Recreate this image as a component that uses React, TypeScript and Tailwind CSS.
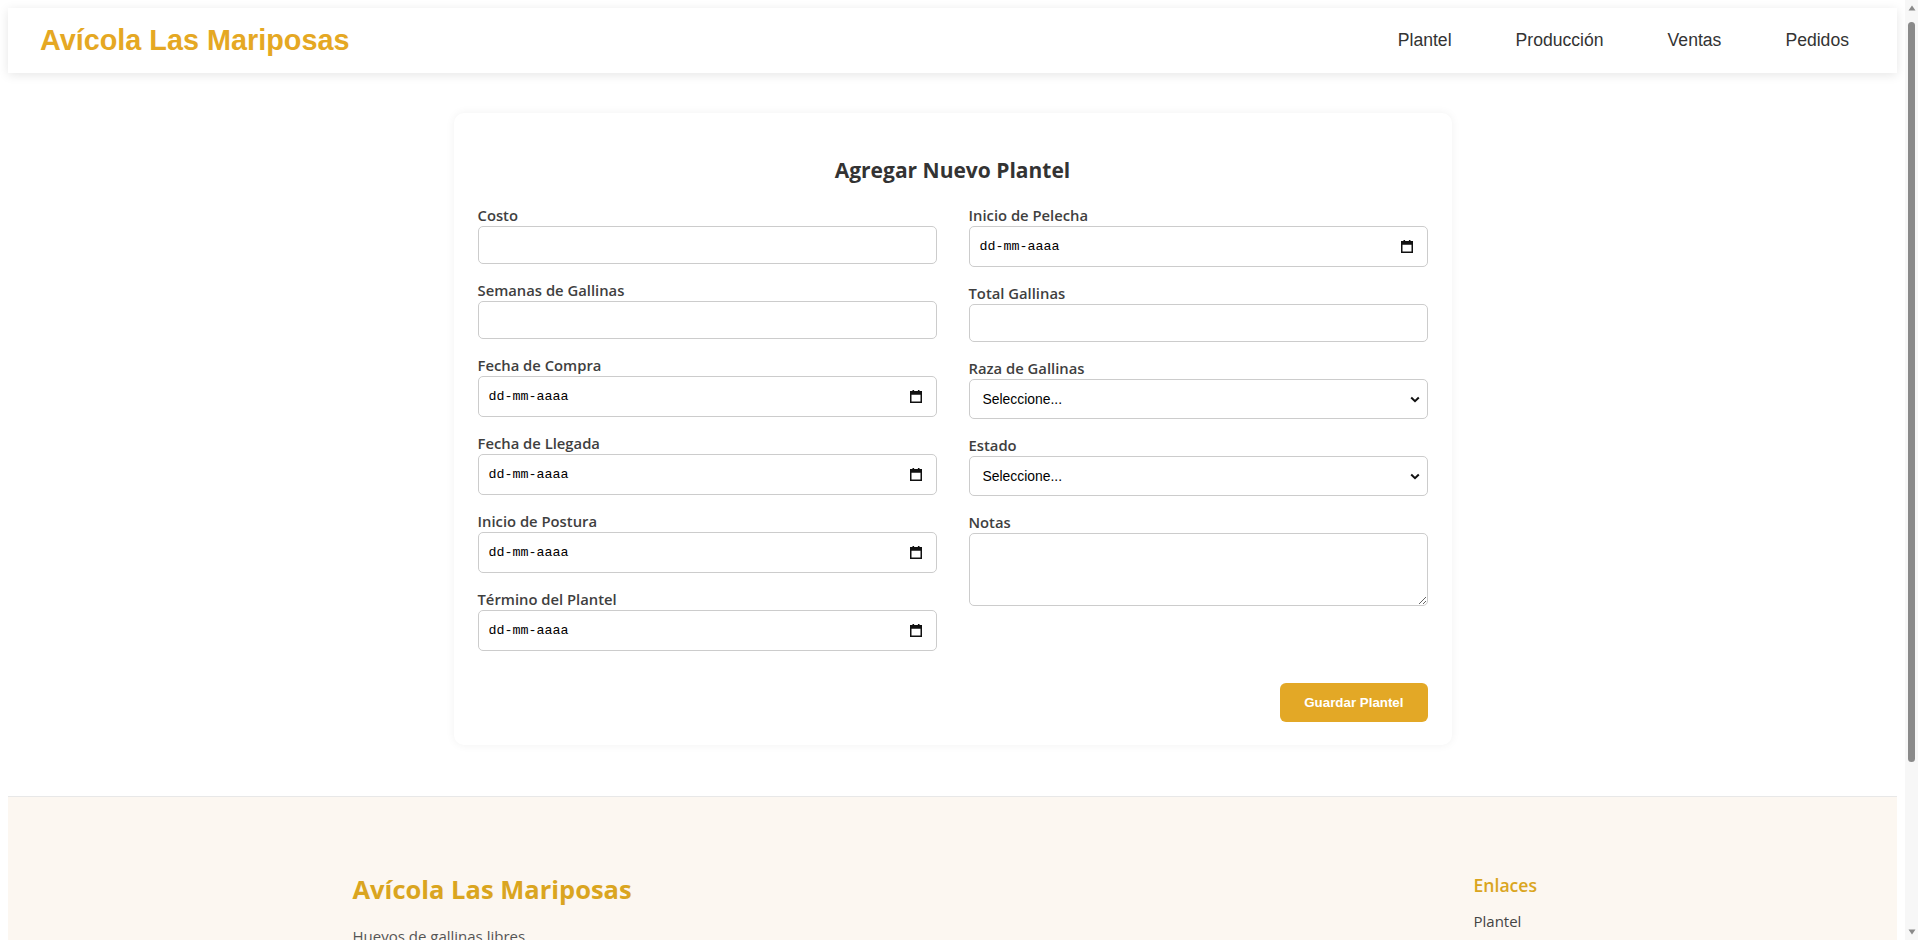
import React from "react";

const leftFields: { label: string; type: "text" | "date" }[] = [
  { label: "Costo", type: "text" },
  { label: "Semanas de Gallinas", type: "text" },
  { label: "Fecha de Compra", type: "date" },
  { label: "Fecha de Llegada", type: "date" },
  { label: "Inicio de Postura", type: "date" },
  { label: "Término del Plantel", type: "date" },
];

function CalendarIcon() {
  return (
    <svg width="12" height="13" viewBox="0 0 12 13" aria-hidden="true">
      <rect x="2.5" y="0" width="1.6" height="2.5" fill="#111" />
      <rect x="7.9" y="0" width="1.6" height="2.5" fill="#111" />
      <rect x="0.75" y="1.75" width="10.5" height="10.5" fill="none" stroke="#111" strokeWidth="1.5" />
      <rect x="0.75" y="1.75" width="10.5" height="3" fill="#111" />
    </svg>
  );
}

function Chevron() {
  return (
    <svg width="10" height="7" viewBox="0 0 10 7" aria-hidden="true">
      <path d="M1.2 1.5L5 5.2l3.8-3.7" fill="none" stroke="#111" strokeWidth="2" />
    </svg>
  );
}

function Label({ children }: { children: React.ReactNode }) {
  return (
    <label className="block text-[14.8px] font-semibold leading-[21px] text-[#3f3f3f]">{children}</label>
  );
}

function TextField({ label }: { label: string }) {
  return (
    <div className="mb-4">
      <Label>{label}</Label>
      <input
        type="text"
        className="block h-[38px] w-full rounded-[5px] border border-[#cccccc] bg-white px-[10px] text-[14px] outline-none"
      />
    </div>
  );
}

function DateField({ label }: { label: string }) {
  return (
    <div className="mb-4">
      <Label>{label}</Label>
      <div className="flex h-[41px] w-full items-center justify-between rounded-[5px] border border-[#cccccc] bg-white pl-[10px] pr-[14px]">
        <span className="font-['Liberation_Mono','DejaVu_Sans_Mono',monospace] text-[13.33px] text-black">dd-mm-aaaa</span>
        <CalendarIcon />
      </div>
    </div>
  );
}

function SelectField({ label }: { label: string }) {
  return (
    <div className="mb-4">
      <Label>{label}</Label>
      <div className="relative">
        <select className="block h-[40px] w-full appearance-none rounded-[5px] border border-[#cccccc] bg-white pl-[13px] font-['Liberation_Sans',Arial,sans-serif] text-[13.9px] text-black outline-none">
          <option>Seleccione...</option>
        </select>
        <span className="pointer-events-none absolute right-[8px] top-[17px] flex">
          <Chevron />
        </span>
      </div>
    </div>
  );
}

function FakeScrollbar() {
  return (
    <div className="fixed right-0 top-0 flex h-screen w-[13px] flex-col items-center bg-[#f7f7f7]">
      <svg width="8" height="6" viewBox="0 0 8 6" className="mt-[5px]" aria-hidden="true">
        <path d="M4 0.5L7.5 5.5H0.5z" fill="#8a8a8a" />
      </svg>
      <div className="mt-[11px] h-[740px] w-[7px] rounded-full bg-[#8a8a8a]" />
      <div className="flex-1" />
      <svg width="8" height="6" viewBox="0 0 8 6" className="mb-[5px]" aria-hidden="true">
        <path d="M4 5.5L7.5 0.5H0.5z" fill="#8a8a8a" />
      </svg>
    </div>
  );
}

export default function App() {
  return (
    <div className="pr-[13px]">
      <div className="bg-white p-2 font-['Open_Sans','Noto_Sans',sans-serif] text-[#333]">
        <header className="flex items-center justify-between bg-white px-8 py-4 font-['Liberation_Sans',Arial,sans-serif] shadow-[0_2px_10px_rgba(0,0,0,0.1)]">
          <h1 className="text-[28.8px] font-bold leading-[33px] text-[#e5a823]">Avícola Las Mariposas</h1>
          <nav className="flex gap-8 text-[17.6px] text-[#333]">
            {["Plantel", "Producción", "Ventas", "Pedidos"].map((l) => (
              <a key={l} href="#" className="px-4">
                {l}
              </a>
            ))}
          </nav>
        </header>

        <main className="pt-10 pb-[51px]">
          <div className="mx-auto w-full max-w-[998px] rounded-[10px] bg-white px-6 pt-[41px] pb-[23px] shadow-[0_0_10px_rgba(0,0,0,0.06)]">
            <h2 className="mb-[19px] text-center text-[21px] font-bold leading-[32px] text-[#333]">Agregar Nuevo Plantel</h2>
            <div className="grid grid-cols-2 gap-x-8">
              <div>
                {leftFields.map((f) =>
                  f.type === "text" ? <TextField key={f.label} label={f.label} /> : <DateField key={f.label} label={f.label} />
                )}
              </div>
              <div>
                <DateField label="Inicio de Pelecha" />
                <TextField label="Total Gallinas" />
                <SelectField label="Raza de Gallinas" />
                <SelectField label="Estado" />
                <div className="mb-4">
                  <Label>Notas</Label>
                  <textarea className="block h-[73px] w-full rounded-[5px] border border-[#cccccc] bg-white px-[10px] py-2 text-[14px] outline-none" />
                </div>
              </div>
            </div>
            <div className="mt-4 flex justify-end">
              <button className="h-[39px] rounded-[6px] bg-[#e3a826] px-6 font-['Liberation_Sans',Arial,sans-serif] text-[13.33px] font-bold text-white">
                Guardar Plantel
              </button>
            </div>
          </div>
        </main>

        <footer className="border-t border-[#e8e8e8] bg-[#fcf7f1]">
          <div className="mx-auto flex max-w-[1200px] justify-between pt-[77px] pb-12">
            <div>
              <h3 className="text-[25.5px] font-bold leading-[31px] text-[#daa520]">Avícola Las Mariposas</h3>
              <p className="mt-[19px] text-[15px] leading-[24px] text-[#555]">Huevos de gallinas libres</p>
            </div>
            <div className="w-[79px]">
              <h4 className="mb-[13px] text-[17.6px] font-semibold leading-[22px] text-[#daa520]">Enlaces</h4>
              <ul className="space-y-2 text-[15px] leading-[24px] text-[#444]">
                <li>Plantel</li>
                <li>Producción</li>
                <li>Ventas</li>
                <li>Pedidos</li>
              </ul>
            </div>
          </div>
          <div className="mx-auto max-w-[1200px] border-t border-[#eadfce] py-4 text-center text-[14px] text-[#777]">
            © 2025 Avícola Las Mariposas. Todos los derechos reservados.
          </div>
        </footer>
      </div>
      <FakeScrollbar />
    </div>
  );
}
